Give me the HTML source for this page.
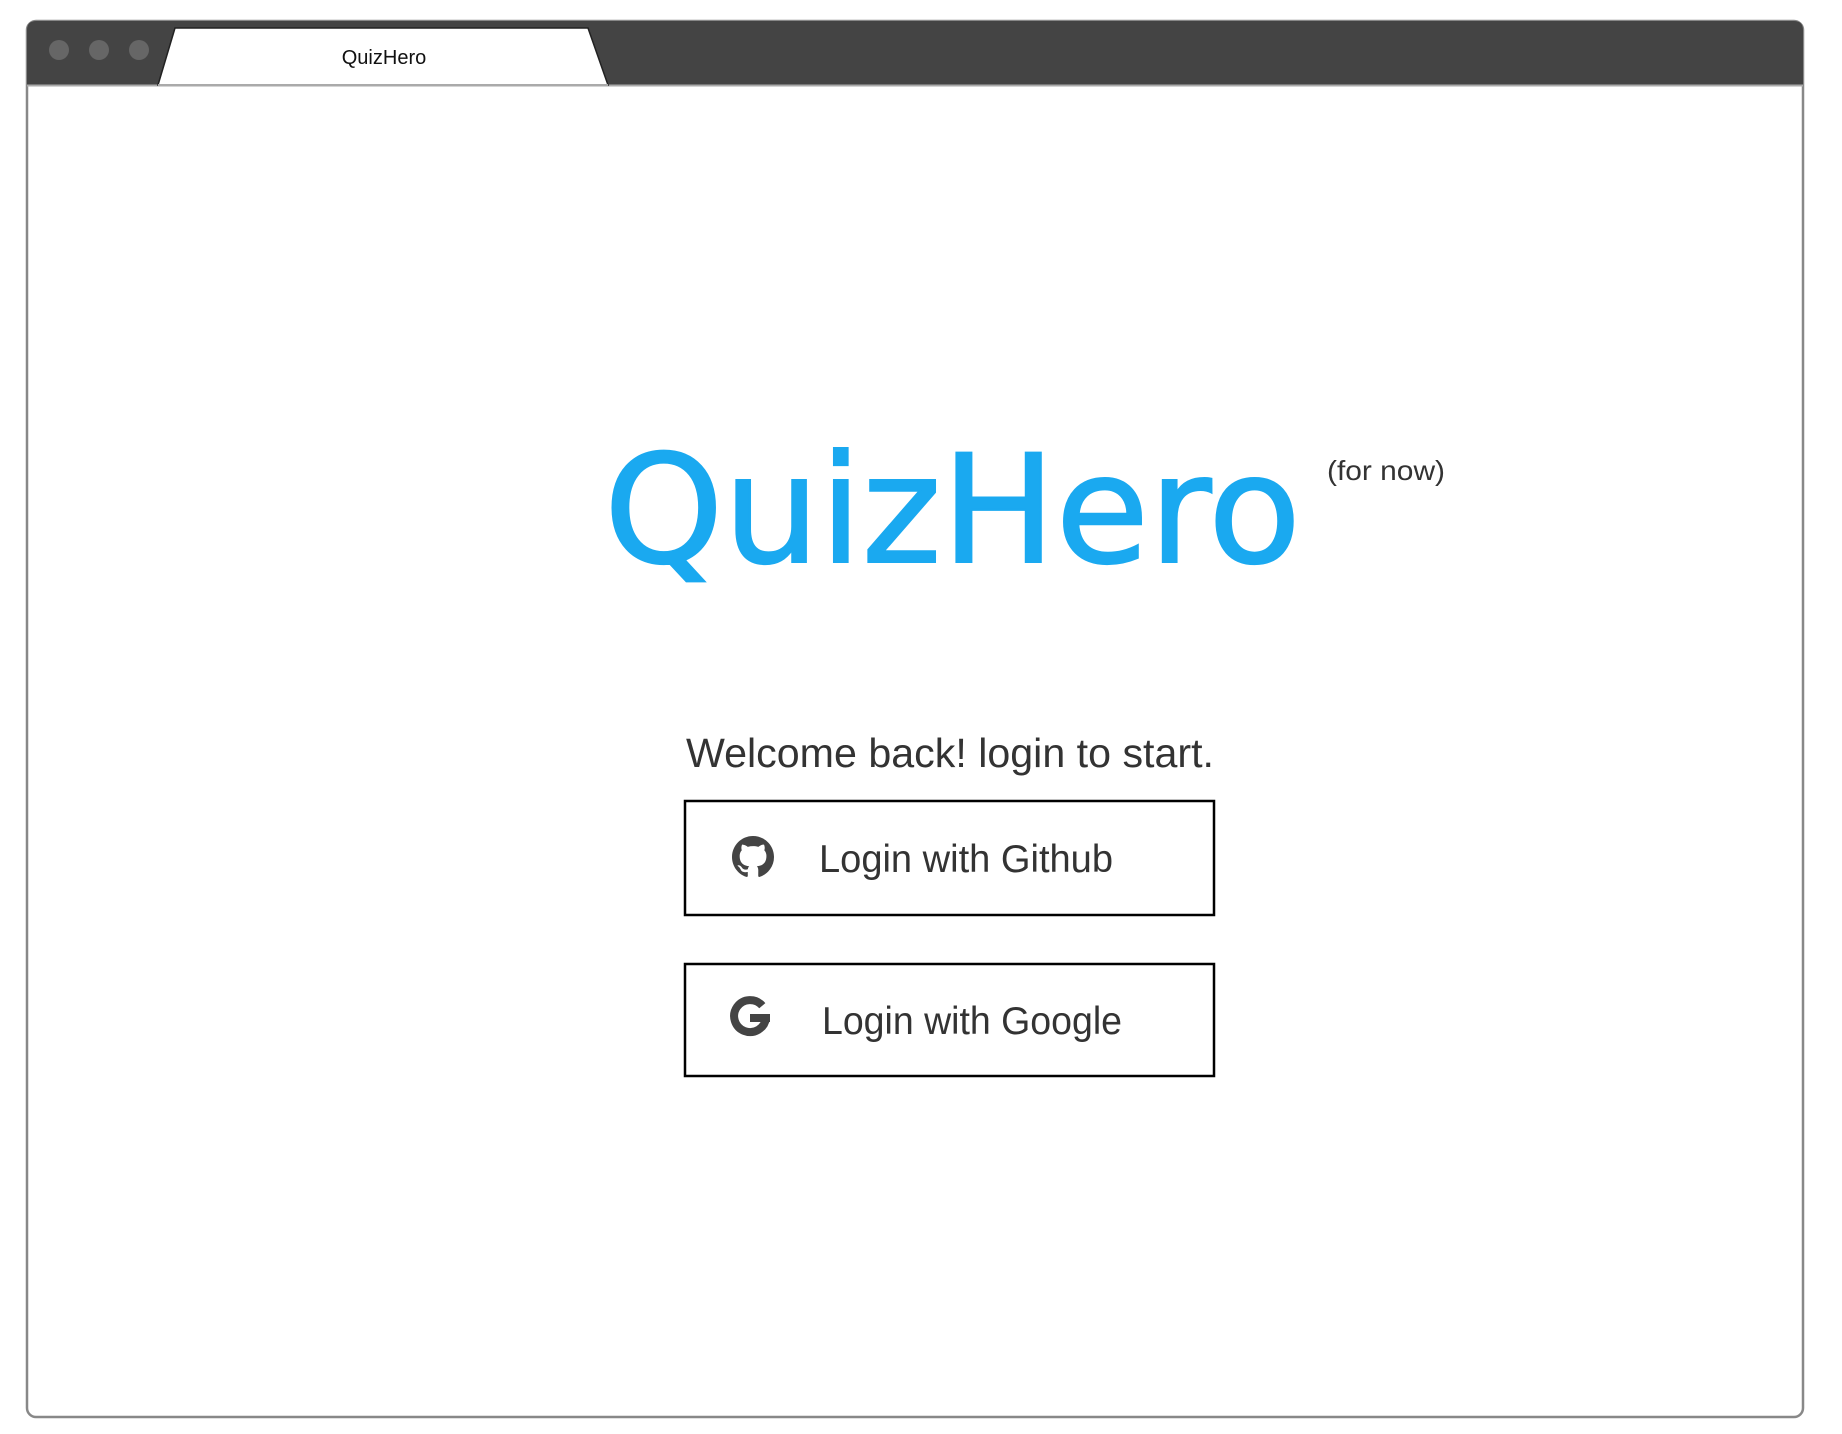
<!DOCTYPE html>
<html><head><meta charset="utf-8"><style>
html,body{margin:0;padding:0;background:#fff;width:1842px;height:1434px;overflow:hidden}
svg{display:block}
</style></head><body>
<svg width="1842" height="1434" viewBox="0 0 1842 1434" xmlns="http://www.w3.org/2000/svg">
<!-- window frame -->
<rect x="27" y="21" width="1776" height="1396" rx="9" ry="9" fill="#fff" stroke="#888" stroke-width="2.5"/>
<path d="M27 85 V30 Q27 21 36 21 H1794 Q1803 21 1803 30 V85 Z" fill="#444"/>
<line x1="27" y1="85.5" x2="1803" y2="85.5" stroke="#aaa" stroke-width="2"/>
<circle cx="59" cy="50" r="10" fill="#666"/>
<circle cx="99" cy="50" r="10" fill="#666"/>
<circle cx="139" cy="50" r="10" fill="#666"/>
<path d="M158 85 L175 28 L588 28 L608 85 Z" fill="#fff" stroke="#222" stroke-width="1.5"/>
<line x1="158" y1="85" x2="608" y2="85" stroke="#aaa" stroke-width="2"/>
<text x="384" y="64" text-anchor="middle" font-family="Liberation Sans, sans-serif" font-size="20" fill="#111">QuizHero</text>

<!-- logo -->
<text x="604" y="562" font-family="DejaVu Sans, sans-serif" font-size="150" fill="#1aa9f0" stroke="#1aa9f0" stroke-width="2" textLength="697" lengthAdjust="spacingAndGlyphs">QuizHero</text>
<text x="1327" y="480" font-family="Liberation Sans, sans-serif" font-size="28" fill="#333" textLength="118" lengthAdjust="spacingAndGlyphs">(for now)</text>

<!-- welcome -->
<text x="686" y="767" font-family="Liberation Sans, sans-serif" font-size="41" fill="#333" textLength="528" lengthAdjust="spacingAndGlyphs">Welcome back! login to start.</text>

<!-- github button -->
<rect x="685" y="801" width="529" height="114" fill="#fff" stroke="#000" stroke-width="2.5"/>
<g transform="translate(732,836) scale(2.625)" fill="#444">
<path d="M8 0C3.58 0 0 3.58 0 8c0 3.54 2.29 6.53 5.47 7.59.4.07.55-.17.55-.38 0-.19-.01-.82-.01-1.49-2.01.37-2.53-.49-2.69-.94-.09-.23-.48-.94-.82-1.13-.28-.15-.68-.52-.01-.53.63-.01 1.08.58 1.23.82.72 1.21 1.87.87 2.33.66.07-.52.28-.87.51-1.07-1.78-.2-3.64-.89-3.64-3.95 0-.87.31-1.59.82-2.15-.08-.2-.36-1.02.08-2.12 0 0 .67-.21 2.2.82.64-.18 1.32-.27 2-.27.68 0 1.36.09 2 .27 1.53-1.04 2.2-.82 2.2-.82.44 1.1.16 1.92.08 2.12.51.56.82 1.27.82 2.15 0 3.07-1.87 3.75-3.650 3.95.29.25.54.73.54 1.48 0 1.07-.01 1.93-.01 2.2 0 .21.15.46.55.38A8.013 8.013 0 0016 8c0-4.42-3.58-8-8-8z"/>
</g>
<text x="819" y="872" font-family="Liberation Sans, sans-serif" font-size="39" fill="#333" textLength="294" lengthAdjust="spacingAndGlyphs">Login with Github</text>

<!-- google button -->
<rect x="685" y="964" width="529" height="112" fill="#fff" stroke="#000" stroke-width="2.5"/>
<path d="M762.3 1005.7 A16 16 0 1 0 766 1018" fill="none" stroke="#444" stroke-width="8"/>
<rect x="750" y="1014" width="20" height="8" fill="#444"/>
<text x="822" y="1034" font-family="Liberation Sans, sans-serif" font-size="39" fill="#333" textLength="300" lengthAdjust="spacingAndGlyphs">Login with Google</text>
</svg>
</body></html>
